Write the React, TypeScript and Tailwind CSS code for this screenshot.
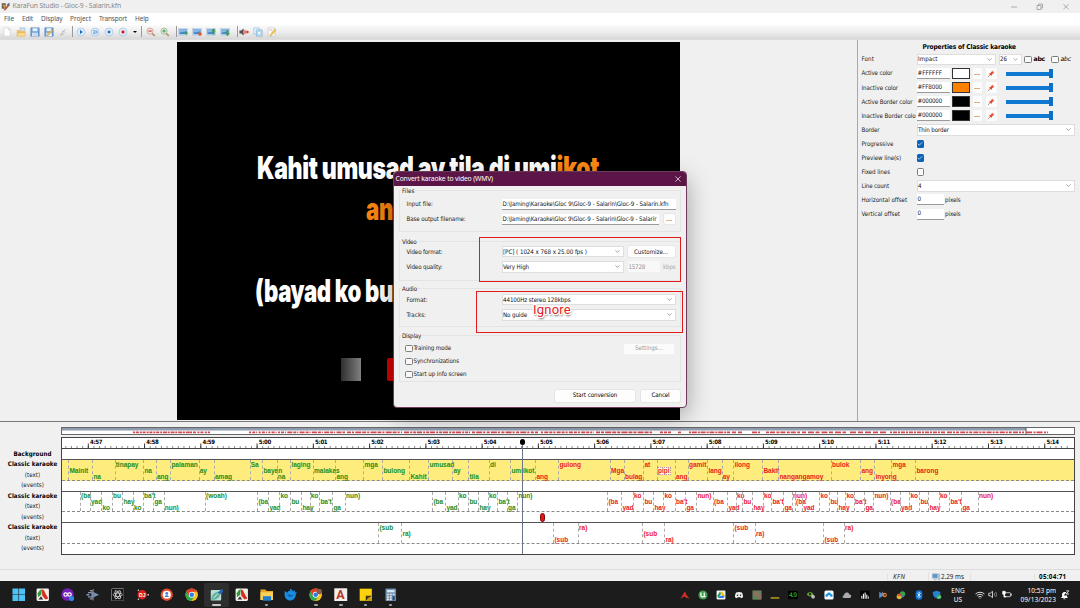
import { useLayoutEffect, useRef, type ReactNode } from 'react';
import { Bluetooth, Check, ChevronDown, Wifi } from 'lucide-react';
import clsx from 'clsx';

type Word = [text: string, x: number, level: number];

const MENUS = [
  { label: 'File', w: 10, pad: 'w-[18px]' },
  { label: 'Edit', w: 11, pad: 'w-[19px]' },
  { label: 'Display', w: 21.5, pad: 'w-[29px]' },
  { label: 'Project', w: 21, pad: 'w-[29px]' },
  { label: 'Transport', w: 28, pad: 'w-9' },
  { label: 'Help', w: 13.5, pad: 'w-6' },
];

const COLORS = [
  { label: 'Active color', w: 31, value: '#FFFFFF', swatch: 'bg-white' },
  { label: 'Inactive color', w: 36.5, value: '#FF8000', swatch: 'bg-[#ff8000]' },
  { label: 'Active Border color', w: 51, value: '#000000', swatch: 'bg-black' },
  { label: 'Inactive Border colo', w: 54, value: '#000000', swatch: 'bg-black' },
];

const TRACK_MAIN: Word[] = [
  ['Mainit', 68.7, 1], ['na', 92.7, 2], ['tinapay', 115, 0], ['na', 143.7, 1], ['ang', 156.3, 2],
  ['palaman', 170.7, 0], ['ay', 199, 1], ['amag', 214.3, 2], ['Sa', 250, 0], ['bayan', 262.7, 1],
  ['na', 277, 2], ['laging', 290.7, 0], ['malakas', 313.3, 1], ['ang', 335.7, 2], ['mga', 363.7, 0],
  ['bulong', 382.7, 1], ['Kahit', 409.7, 2], ['umusad', 428.7, 0], ['ay', 452.7, 1], ['tila', 468.7, 2],
  ['di', 489.3, 0], ['umiikot', 510.7, 1], ['ang', 535.7, 2], ['gulong', 558.7, 0], ['Mga', 610.3, 1],
  ['bulag', 624.3, 2], ['at', 643.7, 0], ['pipi', 657.3, 1], ['ang', 675.3, 2], ['gamit', 688.3, 0],
  ['lang', 707.7, 1], ['ay', 722, 2], ['ilong', 733.7, 0], ['Bakit', 762.7, 1], ['nangangamoy', 778.7, 2],
  ['bulok', 831.3, 0], ['ang', 860.7, 1], ['inyong', 874.7, 2], ['mga', 891.7, 0], ['barong', 915.7, 1],
];

const TRACK_BACKING: Word[] = [
  ['(ba', 80.3, 0], ['yad', 90.3, 1], ['ko', 101.7, 2], ['bu', 112.3, 0], ['hay', 122.7, 1], ['ko', 133.3, 2],
  ["ba't", 143.3, 0], ['ga', 153.7, 1], ['nun)', 164, 2], ['(woah)', 205.3, 0], ['(ba', 257.7, 1],
  ['yad', 268.7, 2], ['ko', 279.7, 0], ['bu', 290.7, 1], ['hay', 301.7, 2], ['ko', 310, 0], ["ba't", 319.7, 1],
  ['ga', 332.7, 2], ['nun)', 345.3, 0], ['(ba', 432.7, 1], ['yad', 445.7, 2], ['ko', 458.3, 0], ['bu', 468.7, 1],
  ['hay', 478.7, 2], ['ko', 488.3, 0], ["ba't", 497.7, 1], ['ga', 507.3, 2], ['nun)', 517.7, 0],
  ['(ba', 607.7, 1], ['yad', 621.7, 2], ['ko', 633.3, 0], ['bu', 643.7, 1], ['hay', 653.7, 2], ['ko', 663.7, 0],
  ["ba't", 675.3, 1], ['ga', 685.7, 2], ['nun)', 696.7, 0], ['(ba', 713.3, 1], ['yad', 727.7, 2],
  ['ko', 736.3, 0], ['bu', 742.7, 1], ['hay', 752.7, 2], ['ko', 763.3, 0], ["ba't", 771.7, 1], ['ga', 783.7, 2],
  ['nun)', 792.3, 0], ['(ba', 795.3, 1], ['yad', 802.7, 2], ['ko', 819.7, 0], ['bu', 829.7, 1],
  ['hay', 837.7, 2], ['ko', 845.7, 0], ["ba't", 854.3, 1], ['ga', 864.7, 2], ['nun)', 873.7, 0],
  ['(ba', 890.3, 1], ['yad', 900.3, 2], ['ko', 909.7, 0], ['bu', 919.7, 1], ['hay', 928.7, 2], ['ko', 939.3, 0],
  ["ba't", 949.7, 1], ['ga', 961.7, 2], ['nun)', 978.3, 0],
];

const TRACK_SUB: Word[] = [
  ['(sub', 378.7, 0], ['ra)', 401.7, 1], ['(sub', 553.7, 2], ['ra)', 578.3, 0], ['(sub', 642.7, 1],
  ['ra)', 664.7, 2], ['(sub', 733.7, 0], ['ra)', 755.3, 1], ['(sub', 823.7, 2], ['ra)', 844.3, 0],
];

const TIMES = [
  '4:57', '4:58', '4:59', '5:00', '5:01', '5:02', '5:03', '5:04', '5:05',
  '5:06', '5:07', '5:08', '5:09', '5:10', '5:11', '5:12', '5:13', '5:14',
];

const LEFT = 61;
const PLAYHEAD = 522;
const SECOND = 56.26;
const LEVELS = ['top-[1.5px]', 'top-[7.5px]', 'top-[13.7px]'];

// Text set to a known width: spreads the letters, or stretches the glyphs for display type
function Fit({ w, stretch, className, children }: { w: number; stretch?: boolean; className?: string; children: ReactNode }) {
  const ref = useRef<HTMLSpanElement>(null);

  useLayoutEffect(() => {
    const el = ref.current;
    if (!el) return;
    const natural = el.offsetWidth ? el.getBoundingClientRect().width : w;
    if (stretch) {
      el.style.transform = `scaleX(${w / natural})`;
    } else {
      el.style.letterSpacing = `${(w - natural) / (el.textContent?.length || 1)}px`;
    }
  }, [w, stretch]);

  return (
    <span ref={ref} className={clsx('inline-block shrink-0 origin-left whitespace-nowrap', className)}>
      {children}
    </span>
  );
}

/* ---------- toolbar ---------- */

function Sep() {
  return <div className="h-[11px] w-px shrink-0 bg-[#9a9a9a]" />;
}

function Tool({ children }: { children: ReactNode }) {
  return (
    <div className="flex w-[14px] shrink-0 justify-center">
      <svg viewBox="0 0 12 12" className="size-[10px]">
        {children}
      </svg>
    </div>
  );
}

function RoundTool({ children }: { children: ReactNode }) {
  return (
    <Tool>
      <circle cx="6" cy="6" r="4.8" fill="#e4f0fb" stroke="#9cbcdc" strokeWidth=".8" />
      {children}
    </Tool>
  );
}

function ScreenTool({ children }: { children: ReactNode }) {
  return (
    <Tool>
      <rect x=".8" y="1.8" width="10.4" height="8.2" fill="#e6eef6" stroke="#a9bfd6" strokeWidth=".6" />
      <rect x="1.6" y="2.6" width="8.8" height="6.2" fill="#4a88cb" />
      <path d="M1.6 2.6h8.8v2.4l-8.8 1.5z" fill="#8bb9e6" />
      {children}
    </Tool>
  );
}

function Toolbar() {
  return (
    <div className="flex h-[14px] shrink-0 items-center bg-gradient-to-b from-[#fbfbfb] via-[#ededed] to-[#d8d8d8]">
      <Tool>
        <path d="M2.2 1h5.6l2.2 2.3V11H2.2z" fill="#fff" stroke="#c3c7cc" strokeWidth=".7" />
        <path d="M7.6 1v2.5h2.3" fill="none" stroke="#c3c7cc" strokeWidth=".7" />
      </Tool>
      <Tool>
        <path d="M5 1h5.6v6H5z" fill="#cfe0f2" stroke="#8cadd0" strokeWidth=".6" />
        <path d="M1 3.5h3.3l1 1.2h5V11H1z" fill="#f3bf62" />
        <path d="m1 11 1.6-4.2h8.9L10.2 11z" fill="#fbdc93" stroke="#e0a23e" strokeWidth=".5" />
      </Tool>
      <Tool>
        <path d="M1 1h10v10H1z" fill="#6aa0d8" stroke="#4a80b9" strokeWidth=".7" />
        <path d="M3 1.4h6v3.6H3zM2.6 7h6.8v4H2.6z" fill="#e9f2fb" />
        <path d="M3.6 8.4h5M3.6 9.7h5" stroke="#8aa9ca" strokeWidth=".6" />
      </Tool>
      <Tool>
        <path d="M1 1h10v10H1z" fill="#6aa0d8" stroke="#4a80b9" strokeWidth=".7" />
        <path d="M3 1.4h6v3.6H3zM2.6 7h6.8v4H2.6z" fill="#e9f2fb" />
        <path d="m4 8.5 5.5-5.5 1.4 1.3L5.3 9.8l-1.9.5z" fill="#f6c65a" stroke="#9c7b35" strokeWidth=".5" />
      </Tool>
      <Tool>
        <path d="M3 10 8.8 2.5M3.5 8.4l3.7.3M5.2 5l3.3 1.2M2.6 9.8l1.7-.5" stroke="#b6b6b6" fill="none" />
      </Tool>
      <div className="w-[1.5px]" />
      <Sep />
      <div className="w-[1.5px]" />
      <RoundTool><path d="m4.7 3.4 3.6 2.6-3.6 2.6z" fill="#1f6fc4" /></RoundTool>
      <RoundTool>
        <path d="M3.4 4.7h4.8v2.6H4.4M5.6 6 4 7.3l1.6 1.2" stroke="#3a84cd" strokeWidth=".9" fill="none" />
      </RoundTool>
      <RoundTool><path d="M4.4 4.4h3.2v3.2H4.4z" fill="#1f6fc4" /></RoundTool>
      <RoundTool><path d="M4.3 4.3h3.4v3.4H4.3z" fill="#d51a1a" /></RoundTool>
      <div className="flex w-[10.5px] justify-center">
        <div className="border-x-[2px] border-t-[2.5px] border-x-transparent border-t-black" />
      </div>
      <Sep />
      <div className="w-[2px]" />
      <Tool>
        <path d="m7 7.4 3.6 3.2" stroke="#b98b58" strokeWidth="1.8" />
        <circle cx="4.9" cy="4.9" r="3.7" fill="#f0e2dd" stroke="#cfa298" />
        <path d="M3 4.9h3.8" stroke="#cf4034" strokeWidth="1.4" />
      </Tool>
      <Tool>
        <path d="m7 7.4 3.6 3.2" stroke="#b98b58" strokeWidth="1.8" />
        <circle cx="4.9" cy="4.9" r="3.7" fill="#dcebd9" stroke="#9db398" />
        <path d="M3 4.9h3.8M4.9 3v3.8" stroke="#3f9e45" strokeWidth="1.2" />
      </Tool>
      <div className="w-[4px]" />
      <Sep />
      <div className="-ml-[0.5px] flex">
        <ScreenTool><path d="M8 6.6h3.8v1.3H8zM9.3 5.4h1.3v3.8H9.3z" fill="#2f9e3a" /></ScreenTool>
        <ScreenTool><circle cx="9.6" cy="8.4" r="2.1" fill="#e2592f" /></ScreenTool>
        <ScreenTool><path d="M9 1.6 11.6 5h-1.5v4H7.9V5H6.4z" fill="#3aa046" /></ScreenTool>
        <ScreenTool><path d="M9 11 6.4 7.6h1.5v-4h2.2v4h1.5z" fill="#3aa046" /></ScreenTool>
      </div>
      <div className="w-[4.5px]" />
      <Sep />
      <div className="-ml-[0.5px] flex">
        <Tool>
          <path d="M.5 4.3h2l3-2.6v8.6l-3-2.6h-2z" fill="#555" />
          <path d="M7 3.5v5M8.5 4.3v3.4" stroke="#d23b34" strokeWidth="1" />
          <circle cx="10.2" cy="6" r="1.5" fill="#e03d35" />
        </Tool>
        <Tool>
          <path d="M1 1h6.5v7.5H1z" fill="#e8f3fb" stroke="#86b8da" strokeWidth=".7" />
          <path d="M4 3.5h7V11H4z" fill="#c6e2f5" stroke="#6aa7d0" strokeWidth=".7" />
          <circle cx="7.5" cy="7.2" r="2" fill="#fff" stroke="#7fb3d6" strokeWidth=".6" />
        </Tool>
        <Tool>
          <path d="M1.5 1h8v10h-8z" fill="#fff" stroke="#bbb" strokeWidth=".7" />
          <path d="M3 3h4M3 4.5h3" stroke="#aaa" strokeWidth=".6" />
          <path d="m4 8.7 5.2-6 1.6 1.3-5.2 6-2.1.8z" fill="#f4cf4d" stroke="#ae8b2f" strokeWidth=".5" />
        </Tool>
      </div>
    </div>
  );
}

/* ---------- properties panel ---------- */

function Select({ className, children }: { className?: string; children: ReactNode }) {
  return (
    <div className={clsx('flex h-[11.5px] shrink-0 items-center justify-between border border-[#dedede] bg-white pl-[0.5px] pr-[2px] text-[#111]', className)}>
      {children}
      <ChevronDown className="size-[7px] text-[#555]" strokeWidth={1.8} />
    </div>
  );
}

function Box({ checked }: { checked?: boolean }) {
  return (
    <div
      className={clsx(
        'flex size-[7.5px] shrink-0 items-center justify-center rounded-[1.5px]',
        checked ? 'bg-[#0b63b8]' : 'border border-[#7c7c7c] bg-[#f8f8f8]',
      )}
    >
      {checked && <Check className="size-[6px] text-white" strokeWidth={2.5} />}
    </div>
  );
}

function Field({ className, children }: { className?: string; children?: ReactNode }) {
  return (
    <div className={clsx('flex h-[11px] shrink-0 items-center overflow-hidden border-b border-[#9a9a9a] bg-white pl-[1px] text-[#111]', className)}>
      {children}
    </div>
  );
}

function PropRow({ label, w, children }: { label: string; w: number; children: ReactNode }) {
  return (
    <div className="flex h-[14.05px] items-center">
      <div className="flex w-[55px] shrink-0">
        <Fit w={w}>{label}</Fit>
      </div>
      {children}
    </div>
  );
}

function Properties() {
  return (
    <aside className="flex w-[223px] shrink-0 flex-col border-l border-[#a9a9a9] bg-[#f0f0f0] pl-[3.5px] font-['DejaVu_Sans_Condensed','DejaVu_Sans'] text-[6.2px] leading-none text-[#222]">
      <div className="flex h-[11.5px] shrink-0 items-end pl-[61px] text-[6.6px] font-bold text-black">
        <Fit w={93.5}>Properties of Classic karaoke</Fit>
      </div>
      <div className="h-[1.5px] shrink-0" />
      <PropRow label="Font" w={12.5}>
        <Select className="w-[79px]"><Fit w={19.5}>Impact</Fit></Select>
        <Select className="ml-[3px] w-[23px]"><Fit w={7}>26</Fit></Select>
        <div className="ml-[2.5px] flex items-center gap-[2px]">
          <Box />
          <Fit w={11.5} className="font-['DejaVu_Sans'] font-bold text-black">abc</Fit>
        </div>
        <div className="ml-[6px] flex items-center gap-[2px]">
          <Box />
          <Fit w={10.5} className="font-['DejaVu_Sans'] italic text-black">abc</Fit>
        </div>
      </PropRow>
      {COLORS.map((c) => (
        <PropRow key={c.label} label={c.label} w={c.w}>
          <Field className="w-[33px]"><Fit w={24.5}>{c.value}</Fit></Field>
          <div className={clsx('ml-[2.5px] h-[10.5px] w-[17.5px] border border-[#333]', c.swatch)} />
          <div className="ml-[3px] flex h-[11px] w-[9px] items-center justify-center rounded-[1px] bg-[#fcfcfc] text-[7px] text-black">...</div>
          <div className="ml-[4px] flex h-[11px] w-[11.5px] items-center justify-center rounded-[1px] bg-[#fcfcfc]">
            <svg viewBox="0 0 10 10" className="size-[8px]">
              <path d="m1 9 3-3.2" stroke="#777" strokeWidth=".9" />
              <path d="m2.4 4.6 3 3 .8-2L8.8 3.4 6.7 1.2 4.4 3.8z" fill="#e2452f" />
              <path d="m6 1 3 2.7" stroke="#f08a75" strokeWidth="1.3" />
            </svg>
          </div>
          <div className="ml-[8.5px] flex w-[47px] items-center">
            <div className="h-[4px] grow bg-[#0f78d0]" />
            <div className="h-[8.5px] w-[3.5px] bg-[#0f6fc4]" />
          </div>
        </PropRow>
      ))}
      <PropRow label="Border" w={18}>
        <Select className="w-[158px]"><Fit w={31}>Thin border</Fit></Select>
      </PropRow>
      <PropRow label="Progressive" w={32}><Box checked /></PropRow>
      <PropRow label="Preview line(s)" w={39.5}><Box checked /></PropRow>
      <PropRow label="Fixed lines" w={28.5}><Box /></PropRow>
      <PropRow label="Line count" w={27.5}>
        <Select className="w-[158px]"><span>4</span></Select>
      </PropRow>
      <PropRow label="Horizontal offset" w={45.5}>
        <Field className="w-[27px]">0</Field>
        <Fit w={15.5} className="ml-[1.5px]">pixels</Fit>
      </PropRow>
      <PropRow label="Vertical offset" w={38.5}>
        <Field className="w-[27px]">0</Field>
        <Fit w={15.5} className="ml-[1.5px]">pixels</Fit>
      </PropRow>
    </aside>
  );
}

/* ---------- conversion dialog ---------- */

function Group({ title, w, className, children }: { title: string; w: number; className: string; children: ReactNode }) {
  return (
    <fieldset className={clsx('relative ml-[5px] w-[282px] shrink-0 border border-[#e4e4e4]', className)}>
      <div className="absolute -top-[3.5px] left-[1px] bg-[#f0f0f0] px-[1px]">
        <Fit w={w}>{title}</Fit>
      </div>
      {children}
    </fieldset>
  );
}

function DialogRow({ label, w, children }: { label: string; w: number; children: ReactNode }) {
  return (
    <div className="flex h-[15.3px] items-center pl-[6.5px]">
      <div className="flex w-[95px] shrink-0">
        <Fit w={w}>{label}</Fit>
      </div>
      {children}
    </div>
  );
}

function ConvertDialog() {
  return (
    <div className="absolute left-[393px] top-[171px] flex h-[237px] w-[294px] flex-col overflow-hidden rounded-[4px] border border-[#6d3a5b] bg-[#f0f0f0] font-['DejaVu_Sans_Condensed','DejaVu_Sans'] text-[6.2px] leading-none text-[#222] shadow-[0_8px_24px_rgba(0,0,0,0.35)]">
      <div className="flex h-[14px] shrink-0 items-center justify-between bg-[#5b1647] pl-[1.5px] pr-[5px] font-['Noto_Sans'] text-[6.8px] text-white">
        <Fit w={97.5}>Convert karaoke to video (WMV)</Fit>
        <svg viewBox="0 0 8 8" className="size-[6px]">
          <path d="m.5.5 7 7m0-7-7 7" stroke="#fff" strokeWidth=".9" />
        </svg>
      </div>

      <Group title="Files" w={12.5} className="mt-[4px] h-[42px] pt-[5.5px]">
        <DialogRow label="Input file:" w={26.5}>
          <Field className="w-[174px]"><Fit w={166}>{'D:\\Jaming\\Karaoke\\Gloc 9\\Gloc-9 - Salarin\\Gloc-9 - Salarin.kfn'}</Fit></Field>
        </DialogRow>
        <DialogRow label="Base output filename:" w={59}>
          <Field className="w-[157px]"><Fit w={154}>{'D:\\Jaming\\Karaoke\\Gloc 9\\Gloc-9 - Salarin\\Gloc-9 - Salarir'}</Fit></Field>
          <div className="ml-[5px] flex h-[10px] w-[11px] items-center justify-center rounded-[1px] bg-[#fdfdfd] text-[7px] shadow-[0_0_1px_#999]">...</div>
        </DialogRow>
      </Group>

      <Group title="Video" w={14.5} className="mt-[9px] h-[40px] pt-[2px]">
        <DialogRow label="Video format:" w={36}>
          <Select className="w-[122px]"><Fit w={84}>[PC] ( 1024 x 768 x 25.00 fps )</Fit></Select>
          <div className="ml-[4px] flex h-[10.5px] w-[47px] items-center justify-center rounded-[1px] bg-[#fdfdfd] shadow-[0_0_1px_#999]">
            <Fit w={34}>Customize...</Fit>
          </div>
        </DialogRow>
        <DialogRow label="Video quality:" w={36}>
          <Select className="w-[122px]"><Fit w={26}>Very High</Fit></Select>
          <div className="ml-[4px] flex h-[11px] w-[32px] items-center bg-[#f8f8f8] pl-[1px] text-[#8f8f8f]"><Fit w={16.5}>15728</Fit></div>
          <Fit w={12.5} className="ml-[3.5px] text-[#aaa]">kbps</Fit>
        </DialogRow>
      </Group>

      <Group title="Audio" w={15} className="mt-[7px] h-[39px] pt-[3px]">
        <DialogRow label="Format:" w={21}>
          <Select className="w-[174px]"><Fit w={67.5}>44100Hz stereo 128kbps</Fit></Select>
        </DialogRow>
        <DialogRow label="Tracks:" w={19.5}>
          <Select className="w-[174px]"><Fit w={24}>No guide</Fit></Select>
        </DialogRow>
      </Group>

      <Group title="Display" w={19} className="mt-[8px] h-[47px] pt-[6px]">
        <div className="flex h-[13px] items-center pl-[5px]">
          <Box />
          <Fit w={37.5} className="ml-[1px]">Training mode</Fit>
          <div className="ml-auto mr-[6px] flex h-[10px] w-[50px] items-center justify-center bg-[#fbfbfb] text-[#999]">
            <Fit w={28}>Settings...</Fit>
          </div>
        </div>
        <div className="flex h-[13px] items-center pl-[5px]">
          <Box />
          <Fit w={45.5} className="ml-[1px]">Synchronizations</Fit>
        </div>
        <div className="flex h-[13px] items-center pl-[5px]">
          <Box />
          <Fit w={53} className="ml-[1px]">Start up info screen</Fit>
        </div>
      </Group>

      <div className="mt-[7.5px] flex justify-end gap-[6px] pr-[6px]">
        <div className="flex h-[12px] w-[80px] items-center justify-center rounded-[1px] bg-[#fdfdfd] text-black shadow-[0_0_1px_#888]">
          <Fit w={44.5}>Start conversion</Fit>
        </div>
        <div className="flex h-[12px] w-[39px] items-center justify-center rounded-[1px] bg-[#fdfdfd] text-black shadow-[0_0_1px_#888]">
          <Fit w={18}>Cancel</Fit>
        </div>
      </div>
    </div>
  );
}

function Annotations() {
  return (
    <>
      <div className="absolute left-[479px] top-[237px] h-[45px] w-[202px] border border-[#e01b1b]" />
      <div className="absolute left-[476px] top-[291px] h-[42px] w-[207px] border border-[#e01b1b]" />
      <div className="absolute left-[533px] top-[302.5px] font-['Roboto'] text-[13px] leading-[14px] text-[#e02222] [text-shadow:1px_0_0_#fff,-1px_0_0_#fff,0_1px_0_#fff,0_-1px_0_#fff,1px_1px_0_#fff,-1px_-1px_0_#fff,1px_-1px_0_#fff,-1px_1px_0_#fff,1px_2px_2px_#444]">
        <Fit w={38}>Ignore</Fit>
      </div>
    </>
  );
}

/* ---------- preview ---------- */

function Lyric({ w, className, children }: { w: number; className: string; children: ReactNode }) {
  return (
    <div className={clsx("absolute flex font-['Inter'] text-[31px] font-black leading-[30px] tracking-[-0.5px] text-white", className)}>
      <Fit w={w} stretch>{children}</Fit>
    </div>
  );
}

function Preview() {
  return (
    <div className="flex grow pl-[177px] pt-[2.5px]">
      <div className="relative h-[377.5px] w-[502.5px] overflow-hidden bg-black">
        <Lyric w={342} className="left-[80px] top-[111px]">
          Kahit umusad ay tila di umi<span className="text-[#ff8a14]">ikot</span>
        </Lyric>
        <Lyric w={27} className="left-[188.5px] top-[152px]">
          <span className="text-[#f78410]">an</span>
        </Lyric>
        <Lyric w={138} className="left-[77.5px] top-[233.5px]">(bayad ko bu</Lyric>
        <div className="absolute left-[164px] top-[316px] h-[23px] w-[20px] bg-gradient-to-r from-[#303030] to-[#808080]" />
        <div className="absolute left-[210px] top-[316px] h-[23px] w-[22px] rounded-[2px] bg-[#d40000]" />
      </div>
    </div>
  );
}

/* ---------- timeline ---------- */

function Track({ words, active, children }: { words: Word[]; active?: boolean; children?: ReactNode }) {
  return (
    <div className="relative h-[31.6px] shrink-0 border-t border-[#555]">
      <div className={clsx('relative h-[20.5px] border-b border-dashed border-[#888]', active && 'bg-[#feec7c]')}>
        {words.map(([text, x, level], i) => (
          <div
            key={i}
            className={clsx(
              'absolute inset-y-0 border-l border-dashed border-[#aaa]',
              x < PLAYHEAD ? 'text-[#1c8c1c]' : 'text-[#ea1c1c]',
            )}
            style={{ left: x - LEFT - 1.3 }}
          >
            <span
              className={clsx(
                'absolute left-0 whitespace-nowrap',
                LEVELS[level],
                text === 'pipi' && 'bg-white outline-1 outline-dotted outline-[#b9a]',
              )}
            >
              {text}
            </span>
          </div>
        ))}
      </div>
      {children}
    </div>
  );
}

// Syllable density of the whole song, one dashed run per verse
const RUNS: [number, number, string][] = [
  [133, 163, '2 .8 3 1'], [163, 190, '4 .7 2 .9'], [190, 210, '2 1 3 1.4'], [249, 280, '2 1.2 3 1 1 1.5'],
  [281, 345, '3 .9 1 1.4 5 1'], [347, 402, '4 1 2 1.3 6 .9'], [404, 470, '5 1.2 2 1 3 .8'], [472, 538, '3 1.2 6 1 2 1.5'],
  [541, 594, '2 1.3 4 1 3 1'], [596, 652, '4 1 3 1.2 6 1'], [660, 671, '3 1'], [678, 681, '3 1'],
  [689, 730, '2 .8 5 1'], [732, 742, '4 2'], [752, 760, '5 1'], [766, 800, '3 1 5 1.4'], [802, 846, '4 2 6 1.5'],
  [850, 886, '6 2 5 2'], [890, 945, '2 1 4 1'], [947, 1024, '5 1 2 1 3 1.2'], [1026, 1048, '6 1.5 2 1'],
];

function Timeline() {
  return (
    <div className="flex h-[148px] shrink-0 border-t border-[#777] bg-[#f0f0f0] pt-[5px]">
      <div className="flex w-[61px] shrink-0 flex-col pl-[4px] pt-[21.5px] text-center font-['DejaVu_Sans_Condensed','DejaVu_Sans'] text-[6.2px] leading-none text-[#222]">
        <div className="flex h-[10.5px] items-center justify-center font-bold text-black"><Fit w={38}>Background</Fit></div>
        {[0, 1, 2].map((i) => (
          <div key={i} className="flex h-[31.6px] flex-col items-center">
            <div className="flex h-[10.5px] items-center font-bold text-black"><Fit w={49.5}>Classic karaoke</Fit></div>
            <div className="flex h-[10.5px] items-center"><Fit w={15.5}>(text)</Fit></div>
            <div className="flex h-[10.5px] items-center"><Fit w={22.5}>(events)</Fit></div>
          </div>
        ))}
      </div>

      <div className="flex w-[1014px] shrink-0 flex-col">
        <div className="h-[8px] shrink-0 border border-[#666] bg-white">
          <svg viewBox="62 0 1012 6" className="block h-[6px] w-full" preserveAspectRatio="none">
            <path d="M62 0h964v2.6H62z" fill="#8f9cb0" />
            <path d="M1026 0v6" stroke="#555" />
            {RUNS.map(([from, to, dash]) => (
              <path key={from} d={`M${from} 4.4H${to}`} stroke="#d2474f" strokeWidth="1.6" strokeDasharray={dash} />
            ))}
          </svg>
        </div>

        <div className="relative mt-[2px] flex h-[118px] flex-col border border-[#444] bg-white font-['Liberation_Sans'] text-[6.5px] font-bold leading-none">
          <div className="relative h-[11px] shrink-0 overflow-hidden border-b border-[#444]">
            <svg viewBox="62 0 1012 11" className="block h-[11px] w-full" preserveAspectRatio="none">
              {Array.from({ length: 180 }, (_, i) => {
                const x = 65.8 + i * 5.626;
                return x < 1072 ? <path key={i} d={`M${x} 8v3`} stroke="#555" strokeWidth=".7" /> : null;
              })}
              {TIMES.map((t, i) => (
                <path key={t} d={`M${88.3 + i * SECOND} 5.5v6`} stroke="#222" strokeWidth=".9" />
              ))}
            </svg>
            {TIMES.map((t, i) => (
              <span key={t} className="absolute top-0 font-['DejaVu_Sans_Condensed','DejaVu_Sans'] text-[6px] leading-[7px] text-black" style={{ left: 90 + i * SECOND - LEFT - 1 }}>
                <Fit w={12.3}>{t}</Fit>
              </span>
            ))}
          </div>
          <div className="h-[10px] shrink-0" />
          <Track words={TRACK_MAIN} active />
          <Track words={TRACK_BACKING}>
            <div className="absolute left-[477.5px] top-[21.5px] h-[8.5px] w-[5.5px] rounded-full border border-[#7a0d0d] bg-[#ee1111]" />
          </Track>
          <Track words={TRACK_SUB} />
          <div className="absolute bottom-0 left-[460px] top-[3px] w-px bg-[#6a7486]" />
          <div className="absolute left-[458px] top-[1px] h-[6px] w-[5px] rounded-full bg-black" />
        </div>
      </div>
    </div>
  );
}

/* ---------- taskbar ---------- */

function Chrome() {
  return (
    <>
      <circle cx="7" cy="7" r="6.5" fill="#fbc116" />
      <path d="M1.4 3.7A6.5 6.5 0 0 1 12.6 3.8H7L4.2 8.6z" fill="#e33b2e" />
      <path d="M1.4 3.7A6.5 6.5 0 0 0 6.6 13.5L9.8 8.6 4.3 8.7z" fill="#2da94f" />
      <circle cx="7" cy="7" r="3.1" fill="#fff" />
      <circle cx="7" cy="7" r="2.4" fill="#2f7de9" />
    </>
  );
}

function Parrot() {
  return (
    <>
      <rect x=".6" y=".6" width="12.8" height="12.8" rx="1.2" fill="#f3f1ea" />
      <path d="M1.8 5.5C3 3 4.5 1.8 6 1.6L5.4 7 2 9.5z" fill="#2c9a3c" />
      <path d="M6 1.6c2 .2 3 1.6 3.4 3.2l3.4 6-3 1L6.5 8z" fill="#d92f1f" />
      <path d="m2.5 12 2.7-3.5L7.5 12z" fill="#333" />
    </>
  );
}

const APPS: { icon: ReactNode; running?: boolean; active?: boolean }[] = [
  {
    icon: <path d="M.5.5h6.2v6.2H.5zM7.3.5h6.2v6.2H7.3zM.5 7.3h6.2v6.2H.5zM7.3 7.3h6.2v6.2H7.3z" fill="#4cc2f5" />,
  },
  { icon: <Parrot /> },
  {
    icon: (
      <>
        <circle cx="6.8" cy="6.8" r="6.5" fill="#7420b8" />
        <circle cx="4.8" cy="6.8" r="1.8" fill="none" stroke="#fff" strokeWidth="1.2" />
        <circle cx="8.8" cy="6.8" r="1.8" fill="none" stroke="#fff" strokeWidth="1.2" />
        <circle cx="11" cy="11" r="2.6" fill="#2b8be6" />
      </>
    ),
  },
  {
    icon: (
      <>
        <path d="M.5 7h3M2 4.8h4M2 9.2h4M4 2.8h3M4 11.2h3" stroke="#7f9bbd" strokeWidth="1.3" />
        <path d="M5.5 3.2 13.5 7l-8 3.8z" fill="#6f91b8" />
        <path d="M7.5 1v12" stroke="#d0645a" strokeWidth="1" />
      </>
    ),
  },
  {
    icon: (
      <>
        <rect x=".5" y=".5" width="13" height="13" rx="1" fill="#171717" stroke="#777" />
        <g fill="none" stroke="#ddd" strokeWidth=".8">
          <ellipse cx="7" cy="7" rx="4.8" ry="1.9" />
          <ellipse cx="7" cy="7" rx="4.8" ry="1.9" transform="rotate(60 7 7)" />
          <ellipse cx="7" cy="7" rx="4.8" ry="1.9" transform="rotate(120 7 7)" />
        </g>
      </>
    ),
  },
  {
    icon: (
      <>
        <circle cx="6.4" cy="7" r="4.8" fill="#e0201b" />
        <circle cx="2.5" cy="2.3" r=".8" fill="#ddd" />
        <circle cx="2.5" cy="11.7" r=".8" fill="#ddd" />
        <circle cx="12.7" cy="7" r=".9" fill="#ddd" />
        <text x="3.2" y="8.9" fontSize="5.2" fontWeight="bold" fill="#fff" fontFamily="Liberation Sans">DJ</text>
      </>
    ),
  },
  {
    icon: (
      <>
        <circle cx="7" cy="7" r="6.4" fill="#e84c2b" />
        <circle cx="7" cy="7" r="4.2" fill="#fff" />
        <circle cx="7" cy="5.6" r="1.4" fill="#3a7bd0" />
        <path d="M4.9 9.3c0-2.3 4.2-2.3 4.2 0z" fill="#3a7bd0" />
      </>
    ),
  },
  { icon: <Chrome /> },
  {
    active: true,
    icon: (
      <>
        <rect x=".8" y="2" width="10.8" height="11" rx="1" fill="#b9dcd3" />
        <path d="M1.5 12.3C1 7.5 4.5 4.5 10.8 3.2 11.5 9 7.5 12.5 1.5 12.3z" fill="#5fb09d" />
        <path d="m3.5 10.5 5-5" stroke="#e4f6ef" strokeWidth="1" />
        <path d="m8 5 4.8-4.5.8 3.5-2.7 2.6z" fill="#2566b2" />
      </>
    ),
  },
  { icon: <Parrot /> },
  {
    running: true,
    icon: (
      <>
        <path d="M.5 1.5h5l1.5 1.7h6.5v9.3H.5z" fill="#e9a825" />
        <path d="M.5 4.4h13v8.1H.5z" fill="#fcd15b" />
        <path d="M3 8.5h8.5v4.7H3z" fill="#1f7fcb" />
      </>
    ),
  },
  {
    icon: (
      <>
        <path d="M.6 3.2 3.4 5C4 3.5 5 2.8 6.6 3L6 .8c2 .4 3 1.4 3.3 2.8L11.5 2l-.2 2.4 2.2.2-1.3 2C12.2 10.500 9.800 13 6.500 13 3 13 .8 10.300.7 7.500z" fill="#1b8be0" />
        <path d="M3.5 6.8c2 0 3.500.6 6 .2-.6 2.600-4.800 3-6-.2z" fill="#0c5aa8" />
      </>
    ),
  },
  {
    running: true,
    icon: (
      <>
        <Chrome />
        <circle cx="10.6" cy="3.6" r="2.8" fill="#8b5b45" />
      </>
    ),
  },
  {
    running: true,
    icon: (
      <>
        <rect x=".3" y=".3" width="13.4" height="13.4" fill="#f4efec" />
        <text x="2.4" y="11.7" fontSize="13" fontWeight="bold" fill="#b5382a" fontFamily="Roboto">A</text>
      </>
    ),
  },
  {
    running: true,
    icon: (
      <>
        <path d="M.7.7h12.6v12.6H.7z" fill="#fbd20c" />
        <path d="M7 13.3V8h6.3z" fill="#3a3318" />
        <path d="M9 10h4.3v3.3H9z" fill="#c79a08" />
      </>
    ),
  },
  {
    running: true,
    icon: (
      <>
        <rect x="1.5" y=".5" width="11" height="13" rx=".8" fill="#6f8ba6" />
        <path d="M3 2h8v2.5H3z" fill="#cfe6f7" />
        <path d="M3 6h2v1.6H3zM6 6h2v1.6H6zM9 6h2v1.6H9zM3 8.5h2v1.6H3zM6 8.5h2v1.6H6zM3 11h2v1.6H3zM6 11h2v1.6H6z" fill="#e6edf3" />
        <path d="M9 8.5h2v4.1H9z" fill="#1e4e82" />
      </>
    ),
  },
];

const TRAY: ReactNode[] = [
  <path key="a" d="M.5 10.5 6 1.5l1.5 4 3.8 5-3.5-1.2L5 7.8z" fill="#d22f24" />,
  <g key="u">
    <circle cx="6" cy="6" r="5.5" fill="#3d9c4a" />
    <path d="M3.5 3v3.5c0 2.5 4 2.5 4 0V3m0 4.5 1.5.8" stroke="#fff" strokeWidth="1.5" fill="none" />
  </g>,
  <g key="d">
    <rect x=".7" y=".7" width="10.6" height="10.6" rx="1" fill="#f5f5f5" />
    <path d="M4.5 2h3l3 5h-3z" fill="#f6b90f" />
    <path d="M4.5 2 1.5 7.2 3 9.5l3-5z" fill="#1d9e58" />
    <path d="M3 9.5 4.5 7h6L9 9.5z" fill="#3778e0" />
  </g>,
  <g key="dc">
    <path d="M2.5 3C5 2 7 2 9.5 3c1 1.8 1.5 3.7 1.3 5.7L8.5 9.8 7.8 8.7H4.2l-.7 1.1-2.3-1.1C1 6.7 1.5 4.8 2.5 3z" fill="#eee" />
    <circle cx="4.2" cy="6.2" r=".9" fill="#222" />
    <circle cx="7.8" cy="6.2" r=".9" fill="#222" />
  </g>,
  <g key="p">
    <rect x=".5" y=".5" width="11" height="11" fill="#6b7d5c" />
    <path d="m1 5 4-4 3 5 3-3v8H6z" fill="#8b6f62" />
    <path d="M1 11 5 7l2 4z" fill="#4b9148" />
  </g>,
  <path key="y" d="M.8 8.8h10.4v1.5H.8z" fill="#d7b918" />,
  <g key="n">
    <rect x=".2" y="1" width="11.6" height="10" fill="#000" />
    <text x="1.2" y="8.8" fontSize="7.5" fill="#2bd03a" fontFamily="DejaVu Sans Mono" textLength="9.5">4.9</text>
  </g>,
  <g key="nv">
    <path d="M1 5c2-3 6-3 8 0-1 2.5-6 4-8 0z" fill="#63a630" />
    <circle cx="4.8" cy="5" r="1.3" fill="#1c1c1c" />
    <circle cx="8.5" cy="8.2" r="2.2" fill="#ddd" />
    <path d="m7.5 8.2.8.8 1.3-1.5" stroke="#333" strokeWidth=".7" fill="none" />
  </g>,
  <g key="c">
    <rect x=".5" y=".5" width="11" height="11" rx="1.8" fill="#f4faff" />
    <path d="M2.2 8C1 6.500 2 4.700 3.500 4.700 4.300 2.300 7.800 2.300 8.500 4.700c1.700 0 2.500 1.900 1.300 3.300z" fill="#2196e6" />
    <circle cx="6" cy="7.8" r="1.5" fill="#fff" />
  </g>,
  <path key="gc" d="M2.5 9.5C.3 9.5.3 6.3 2.5 6.2 2.7 2.5 8 2 8.8 5.5c2.8-.2 3.2 4 .2 4z" fill="#a9abad" />,
  <g key="b">
    <rect x=".5" y=".8" width="11" height="10.5" fill="#000" />
    <path d="M1.5 10.5V7h1.3v3.5zM3.5 10.5v-6h1.3v6zM5.5 10.5V3h1.3v7.5zM7.5 10.5v-5h1.3v5zM9.5 10.5v-3h1v3z" fill="#eee" />
  </g>,
  <g key="m">
    <path d="M1.5 2 6 5v2l-4.5 3z" fill="#4f93d9" />
    <circle cx="8" cy="6" r="2.7" fill="#e0782d" />
    <circle cx="8.4" cy="6" r="1.1" fill="#333" />
    <path d="m5 1.5 2 3-2 1z" fill="#9a9a9a" />
  </g>,
  <g key="k">
    <circle cx="4" cy="7.8" r="3.2" fill="#e2b430" />
    <circle cx="7.8" cy="4.8" r="3.3" fill="#3c9e4b" />
    <path d="M1 7 5 4l2 3z" fill="#d9412c" />
    <path d="m6 8 4.5-2.5L9 9z" fill="#3878d8" />
  </g>,
  <g key="bt">
    <rect x="2" y=".3" width="8" height="11.4" rx="3.5" fill="#1274d1" />
    <Bluetooth x={2} y={2} width={8} height={8} color="#fff" strokeWidth={2.4} />
  </g>,
  <g key="s">
    <path d="M1 2.3 5.5.8 10 2.3c.4 4-1.5 6.5-4.5 8C2.5 8.8.6 6.3 1 2.3z" fill="#2283d2" />
    <circle cx="8.4" cy="8.3" r="2.9" fill="#35a853" />
    <path d="m7 8.4 1.1 1.1 1.9-2.2" stroke="#fff" strokeWidth=".9" fill="none" />
  </g>,
];

function Taskbar() {
  return (
    <div className="flex h-[27px] shrink-0 items-center bg-[#1c1c1c] pl-[6px] text-white">
      {APPS.map((app, i) => (
        <div
          key={i}
          className={clsx(
            'relative flex h-[24px] w-[24.8px] shrink-0 items-center justify-center rounded-[2px]',
            app.active && 'bg-[#2e2e2e]',
          )}
        >
          <svg viewBox="0 0 14 14" className="size-[13.5px]">{app.icon}</svg>
          {app.running && <div className="absolute bottom-[1px] h-[1.5px] w-[3.5px] rounded-full bg-[#a0a0a0]" />}
          {app.active && <div className="absolute bottom-[1px] h-[1.5px] w-[9px] rounded-full bg-[#c8c8c8]" />}
        </div>
      ))}

      <div className="ml-auto flex items-center pr-[10px]">
        {TRAY.map((icon, i) => (
          <div key={i} className="flex w-[18px] shrink-0 justify-center">
            <svg viewBox="0 0 12 12" className="size-[10px]">{icon}</svg>
          </div>
        ))}
        <div className="flex w-[24px] flex-col items-center text-[6.5px] leading-[9px]">
          <Fit w={13.5}>ENG</Fit>
          <Fit w={8.5}>US</Fit>
        </div>
        <div className="ml-[5px] flex items-center">
          <Wifi className="size-[10px]" strokeWidth={2} />
          <svg viewBox="0 0 12 12" className="ml-[3px] size-[9px]" fill="none" stroke="#fff">
            <path d="M1 4.3h2L6 1.8v8.4L3 7.7H1z" />
            <path d="M8 4c1 1.3 1 2.7 0 4M10 2.5c1.7 2.3 1.7 4.7 0 7" stroke="#aaa" />
          </svg>
          <svg viewBox="0 0 14 12" className="ml-[5px] h-[9px] w-[10px]" fill="none" stroke="#fff">
            <rect x="3.5" y="3.5" width="8.5" height="5.5" rx="1" />
            <path d="M13.3 5v2.5" />
            <path d="M1 1.5h3.5v4H1zM2.7 5.5v4H6" fill="#fff" />
          </svg>
        </div>
        <div className="ml-[8px] flex w-[36px] flex-col items-end text-[6.5px] leading-[9px]">
          <Fit w={28.5}>10:53 pm</Fit>
          <Fit w={35.5}>09/13/2023</Fit>
        </div>
        <svg viewBox="0 0 12 12" className="ml-[4px] size-[10px]">
          <path d="M1 9.5h8.5L8.5 8V4.5C8 1.8 3.5 1.8 2.5 4.5V8zM4 10.2h2.5v1H4z" fill="#fff" />
          <path d="M6.5 1h4L7 5.5h4" fill="none" stroke="#1c1c1c" strokeWidth="2.4" />
          <path d="M7.5 1h3L7.5 4.8h3.3" fill="none" stroke="#fff" />
        </svg>
      </div>
    </div>
  );
}

export default function App() {
  return (
    <div className="relative flex h-[608px] w-[1080px] flex-col overflow-hidden bg-[#f0f0f0] font-['Noto_Sans',sans-serif]">
      {/* Title bar */}
      <div className="flex h-[12.5px] shrink-0 items-center pl-[1px] pt-[1px] text-[6.8px] leading-none text-[#8a8a8a]">
        <svg viewBox="0 0 12 12" className="mr-[2px] size-[9.5px]">
          <path d="M1 1.5h5v7H1z" fill="#6a5a58" />
          <path d="m3 11 4-6 3.5-4L11 4 6 10z" fill="#b9574a" />
          <path d="m2 3 5 1-3 4z" fill="#c9a33c" />
          <path d="m7 3 3.5-2L10 4z" fill="#4a6fa0" />
        </svg>
        <Fit w={108.5}>KaraFun Studio - Gloc-9 - Salarin.kfn</Fit>
        <svg viewBox="0 0 64 8" className="ml-auto mr-[11px] h-[8px] w-[64px]" fill="none" stroke="#999" strokeWidth=".8">
          <path d="M6 4h6" />
          <path d="M32 2.5h4v4h-4zM33.5 2.5V1h4v4H36M58.5 1.2l5 5m0-5-5 5" />
        </svg>
      </div>

      {/* Menu */}
      <div className="flex h-[12px] shrink-0 items-center bg-white pl-[4px] pt-[1px] text-[6.5px] leading-none text-[#555]">
        {MENUS.map((m) => (
          <div key={m.label} className={clsx('flex shrink-0', m.pad)}>
            <Fit w={m.w}>{m.label}</Fit>
          </div>
        ))}
      </div>

      <Toolbar />

      <div className="flex h-[382.5px] shrink-0 border-t border-[#dcdcdc]">
        <Preview />
        <Properties />
      </div>

      <Timeline />

      {/* Status bar */}
      <div className="flex h-[12px] shrink-0 items-center border-t border-[#dcdcdc] pl-[887px] pt-[3px] text-[6.3px] leading-none text-[#222]">
        <div className="flex w-[41px] border-l border-[#e2e2e2] pl-[5px]"><Fit w={12.5} className="italic">KFN</Fit></div>
        <div className="flex w-[42px] items-center border-l border-[#e2e2e2] pl-[3px]">
          <svg viewBox="0 0 10 10" className="mr-[0.5px] size-[8.5px]">
            <path d="M.5 1h6v5h-6z" fill="#5c9ad2" stroke="#98a8b8" strokeWidth=".7" />
            <path d="M7 .5h2.5v8H7zM2 7h3.5v1.5H2z" fill="#b8c2cc" />
          </svg>
          <Fit w={23}>2.29 ms</Fit>
        </div>
        <div className="h-[8px] w-[64px] border-l border-[#e2e2e2]" />
        <div className="flex border-l border-[#e2e2e2] pl-[4px]"><Fit w={27.5} className="font-bold text-black">05:04:71</Fit></div>
      </div>

      <Taskbar />

      <ConvertDialog />
      <Annotations />
    </div>
  );
}
